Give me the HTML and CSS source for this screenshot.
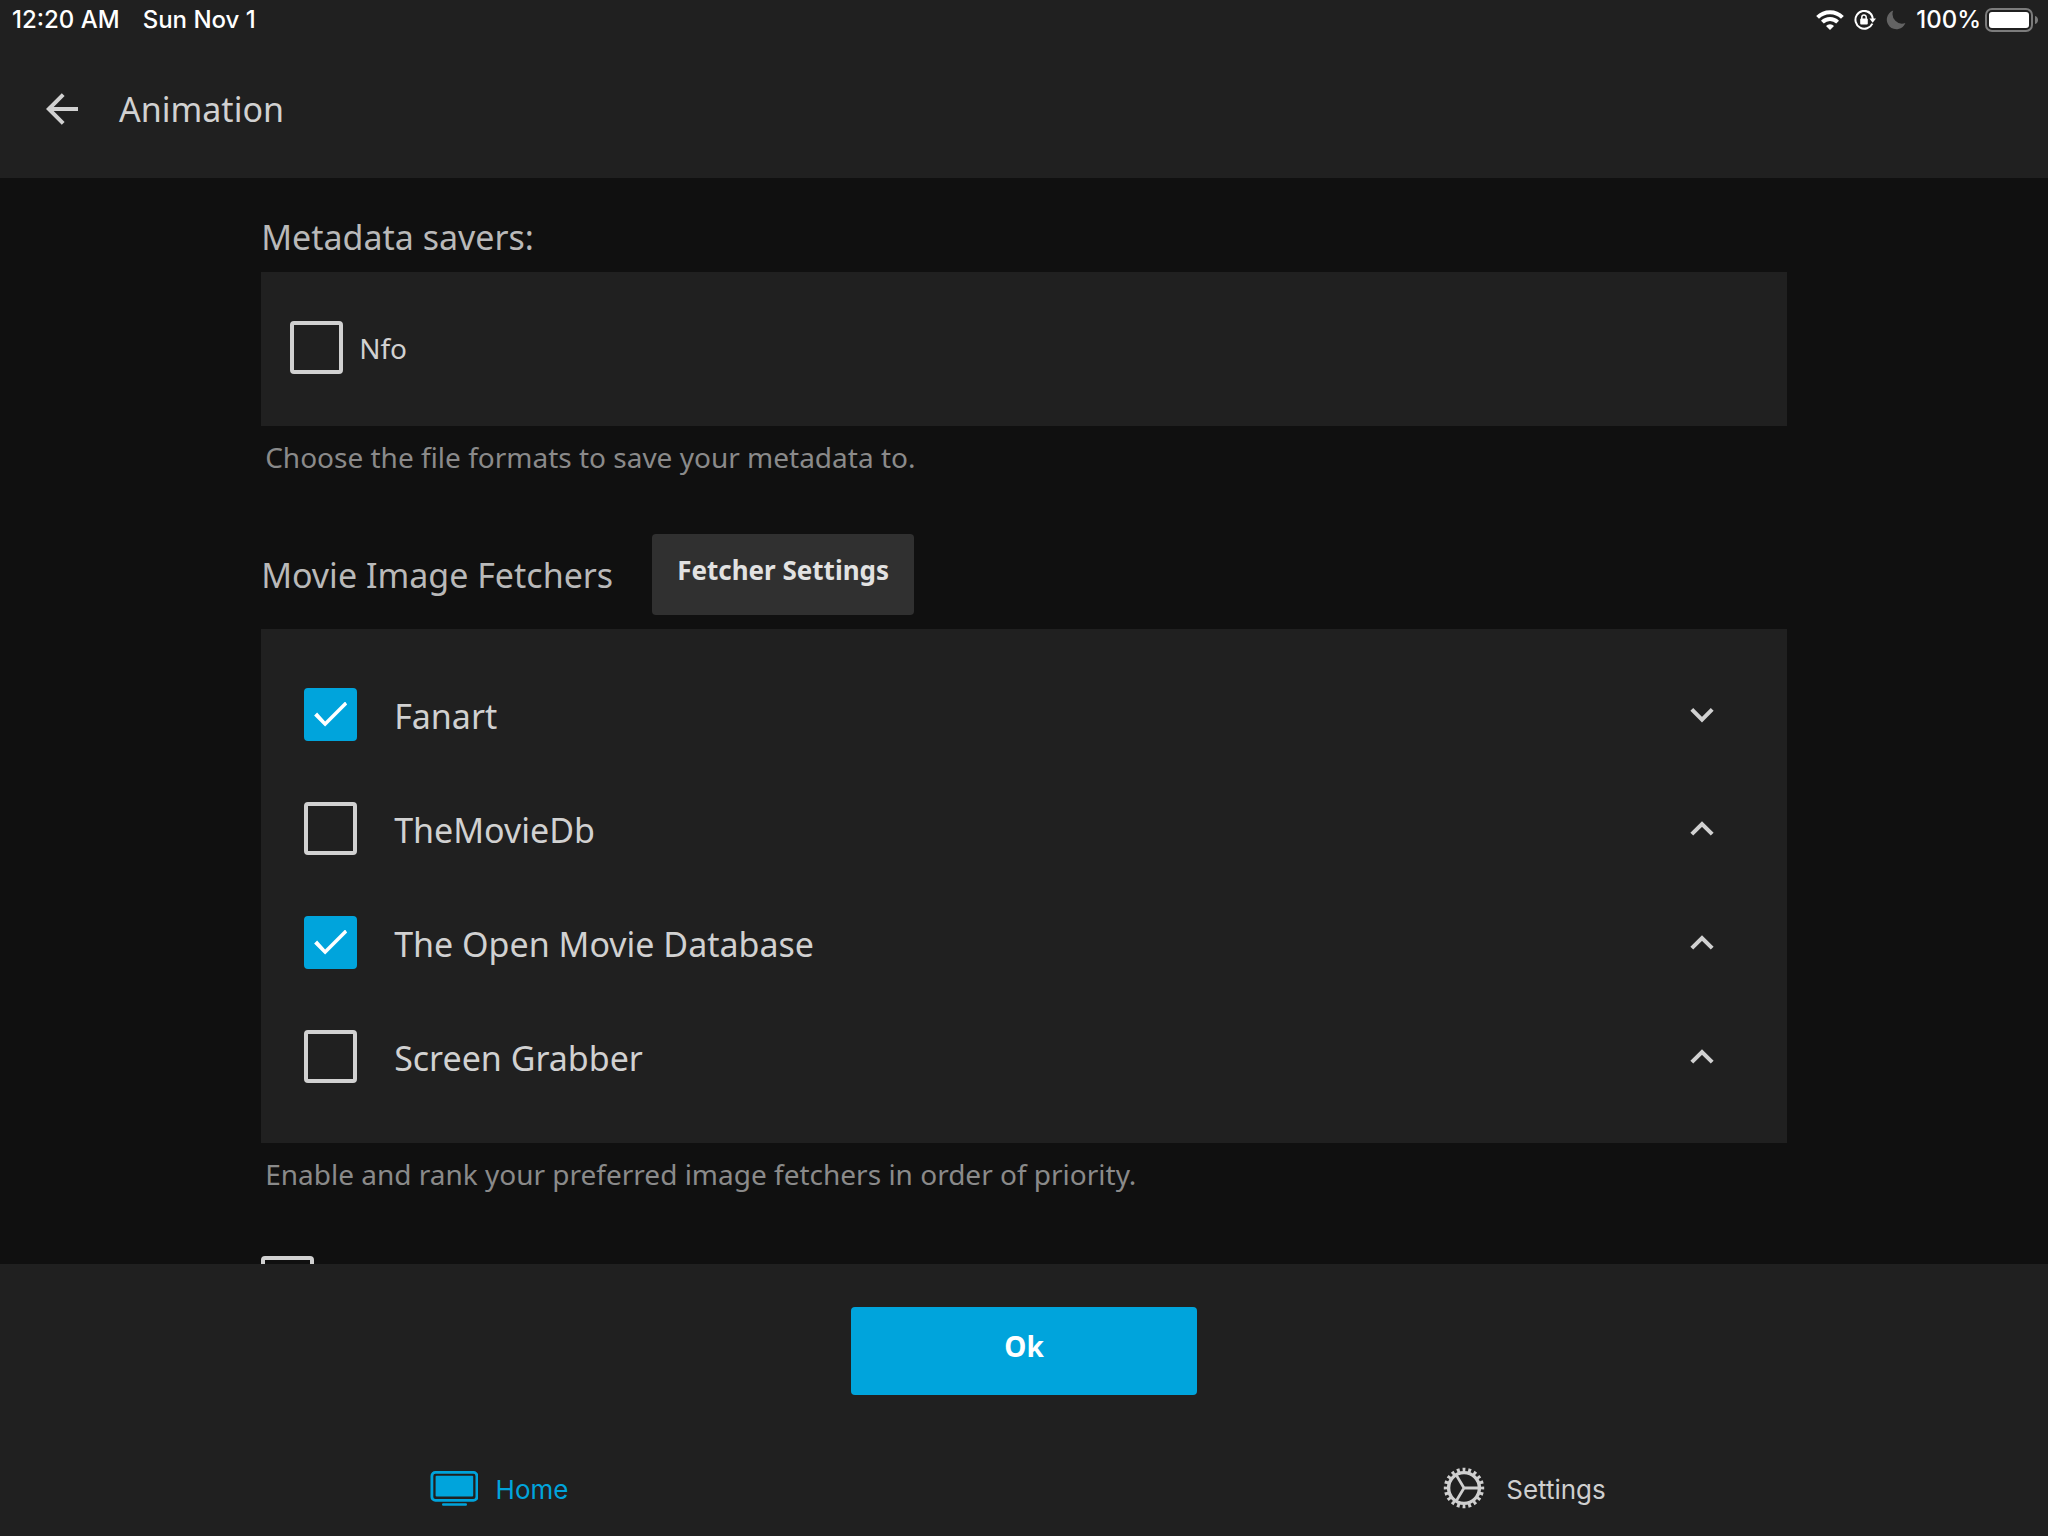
FILE: index.html
```html
<!DOCTYPE html>
<html lang="en">
<head>
<meta charset="utf-8">
<meta name="viewport" content="width=device-width, initial-scale=1">
<title>Animation</title>
<link rel="stylesheet" href="styles.css">
</head>
<body class="app">
<header class="header">
  <div class="status">
    <time>12:20 AM</time>
    <span class="status-date">Sun Nov 1</span>
    <svg class="icon-wifi" width="28" height="20" viewBox="0 0 28 20" fill="none" stroke="#fff" stroke-width="4">
      <path d="M1.6 7.4a17.6 17.6 0 0 1 24.8 0"/>
      <path d="M6.4 12.2a10.8 10.8 0 0 1 15.2 0"/>
      <path d="M14 20l-4-4.1a5.6 5.6 0 0 1 8 0z" fill="#fff" stroke="none"/>
    </svg>
    <svg class="icon-lock" width="22" height="20" viewBox="0 0 22 20" fill="none">
      <path d="M15.6 2.6A8.9 8.9 0 1 0 18.4 13.6" stroke="#fff" stroke-width="2"/>
      <path d="M13.6 1.5a9 9 0 0 1 5.2 7.5" stroke="#fff" stroke-width="2"/>
      <path d="M15.4 8.6h6.6l-3.3 4.2z" fill="#fff"/>
      <rect x="6.2" y="8.6" width="7.6" height="6" rx="1" fill="#fff"/>
      <path d="M7.8 9V7.2a2.2 2.2 0 0 1 4.4 0V9" stroke="#fff" stroke-width="1.5"/>
    </svg>
    <svg class="icon-moon" width="20" height="20" viewBox="0 0 20 20"><path d="M7.2.6A9.6 9.6 0 1 0 19.4 13 9.6 9.6 0 0 1 7.2.6z" fill="#636363"/></svg>
    <span class="status-battery">100%</span>
    <svg class="icon-battery" width="54" height="24" viewBox="0 0 54 24">
      <rect x="1" y="1" width="46" height="22" rx="6" fill="none" stroke="#7c7c7c" stroke-width="2"/>
      <rect x="4" y="4" width="40" height="16" rx="3" fill="#fff"/>
      <path d="M50 8c4 1 4 7 0 8z" fill="#7c7c7c"/>
    </svg>
  </div>
  <div class="titlebar">
    <button class="back" type="button" aria-label="Back">
      <svg width="32" height="32" viewBox="0 0 32 32" fill="none" stroke="#d1d1d1" stroke-width="4"><path d="M32 16H3M17.2 1.6L2.8 16l14.4 14.4"/></svg>
    </button>
    <h1 class="title">Animation</h1>
  </div>
</header>

<main class="content">
  <form class="form" id="options">
    <section class="section">
      <h2 class="heading">Metadata savers:</h2>
      <div class="panel panel-savers">
        <label class="saver"><input class="check" type="checkbox">Nfo</label>
      </div>
      <p class="help">Choose the file formats to save your metadata to.</p>
    </section>

    <section class="section">
      <div class="heading-row">
        <h2 class="heading">Movie Image Fetchers</h2>
        <button class="fetcher-button" type="button">Fetcher Settings</button>
      </div>
      <ul class="panel panel-fetchers">
        <li class="fetcher">
          <label class="fetcher-label"><input class="check" type="checkbox" checked>Fanart</label>
          <button class="move" type="button" aria-label="Move Fanart down"><svg width="24" height="16" viewBox="0 0 24 16"><path d="M1.8 2.4L12 12.6l10.2-10.2"/></svg></button>
        </li>
        <li class="fetcher">
          <label class="fetcher-label"><input class="check" type="checkbox">TheMovieDb</label>
          <button class="move" type="button" aria-label="Move TheMovieDb up"><svg width="24" height="16" viewBox="0 0 24 16"><path d="M1.8 13.2L12 3l10.2 10.2"/></svg></button>
        </li>
        <li class="fetcher">
          <label class="fetcher-label"><input class="check" type="checkbox" checked>The Open Movie Database</label>
          <button class="move" type="button" aria-label="Move The Open Movie Database up"><svg width="24" height="16" viewBox="0 0 24 16"><path d="M1.8 13.2L12 3l10.2 10.2"/></svg></button>
        </li>
        <li class="fetcher">
          <label class="fetcher-label"><input class="check" type="checkbox">Screen Grabber</label>
          <button class="move" type="button" aria-label="Move Screen Grabber up"><svg width="24" height="16" viewBox="0 0 24 16"><path d="M1.8 13.2L12 3l10.2 10.2"/></svg></button>
        </li>
      </ul>
      <p class="help">Enable and rank your preferred image fetchers in order of priority.</p>
    </section>

    <div class="option">
      <input class="check" type="checkbox" aria-label="Save artwork into media folders">
    </div>
  </form>
</main>

<footer class="footer">
  <button class="ok" type="submit" form="options">Ok</button>
  <nav class="tabs">
    <a class="tab tab-active" href="#home">
      <svg width="48" height="44" viewBox="0 0 48 44">
        <rect x="1.9" y="6.4" width="45" height="28" rx="3.5" fill="none" stroke="#00a4dc" stroke-width="2.8"/>
        <rect x="5.6" y="9.8" width="37.6" height="20.6" rx="1" fill="#00a4dc"/>
        <rect x="12" y="37.2" width="25" height="2.6" rx="1.2" fill="#00a4dc"/>
      </svg>
      Home
    </a>
    <a class="tab" href="#settings">
      <svg width="48" height="44" viewBox="0 0 48 44" fill="none" stroke="#cfcfcf">
        <circle cx="24" cy="22" r="15.4" stroke-width="3.4"/>
        <circle cx="24" cy="22" r="18.2" stroke-width="4" pathLength="200" stroke-dasharray="5 5" stroke-dashoffset="2.5"/>
        <path d="M24 22h15M24 22l-8-13.4M24 22l-8 13.4" stroke-width="2.8"/>
      </svg>
      Settings
    </a>
  </nav>
</footer>
</body>
</html>
```
FILE: styles.css
```css
* {
  box-sizing: border-box;
}

.app {
  margin: 0;
  height: 100vh;
  display: grid;
  grid-template-rows: auto minmax(0, 1fr) auto;
  background: #101010;
  color: #d1d1d1;
  font-family: "Noto Sans", sans-serif;
}

button {
  border: 0;
  font-family: inherit;
  color: inherit;
}

svg {
  display: block;
  flex: none;
}

.header,
.footer {
  background: #202020;
}

/* Status bar */
.status {
  display: flex;
  align-items: center;
  height: 40px;
  padding: 0 9px 0 12px;
  color: #fff;
  font: 500 24px/28px Inter, sans-serif;
}

.status-date {
  margin: 0 auto 0 23px;
}

.icon-wifi,
.icon-lock,
.icon-moon {
  margin-right: 10px;
}

.status-battery {
  margin-right: 4px;
}

/* Title bar */
.titlebar {
  display: flex;
  align-items: center;
  gap: 33px;
  height: 138px;
  padding: 0 38px;
}

.back {
  display: grid;
  place-items: center;
  width: 48px;
  height: 48px;
  padding: 0;
  background: none;
}

.title,
.heading {
  margin: 0;
  font-size: 34px;
  font-weight: 400;
  line-height: 46px;
}

.title {
  line-height: 48px;
}

.heading {
  color: #b9b9b9;
}

/* Scrolling form */
.content {
  overflow-y: auto;
  scrollbar-width: none;
}

.form {
  width: 74.5%;
  margin: 0 auto;
  padding: 36px 0;
}

.section {
  margin-bottom: 58px;
}

.panel {
  margin: 12px 0;
  background: #202020;
}

.panel-savers {
  padding: 49px 29px 52px;
}

.saver,
.fetcher-label {
  display: flex;
  align-items: center;
}

.saver {
  gap: 16px;
  font-size: 28px;
  line-height: 38px;
}

.help {
  margin: 0;
  padding-left: 4px;
  color: #8a8a8a;
  font-size: 28px;
  line-height: 38px;
}

.heading-row {
  display: flex;
  align-items: center;
  gap: 39px;
}

.fetcher-button {
  height: 81px;
  padding: 0 25px 10px;
  border-radius: 4px;
  background: #303030;
  color: #e2e2e2;
  font-size: 26px;
  font-weight: 700;
}

.panel-fetchers {
  margin-top: 14px;
  padding: 29px 43px;
  list-style: none;
}

.fetcher {
  display: flex;
  align-items: center;
  justify-content: space-between;
  height: 114px;
}

.fetcher-label {
  gap: 37px;
  padding-top: 2px;
  font-size: 34px;
  line-height: 46px;
}

.fetcher-label .check {
  margin-bottom: 4px;
}

.move {
  display: grid;
  place-items: center;
  width: 84px;
  height: 84px;
  padding: 0;
  background: none;
}

.move path {
  fill: none;
  stroke: #d1d1d1;
  stroke-width: 4;
}

.check {
  appearance: none;
  flex: none;
  display: grid;
  place-items: center;
  width: 53px;
  height: 53px;
  margin: 0;
  border: 4px solid #d1d1d1;
  border-radius: 4px;
}

.check:checked {
  border-color: #00a4dc;
  background: #00a4dc;
}

.check:checked::after {
  content: "";
  width: 33px;
  height: 25px;
  background: #fff;
  clip-path: polygon(0 14px, 3px 11px, 11px 20px, 31px 0, 33px 3px, 11px 25px);
}

.option {
  padding-top: 5px;
}

/* Footer */
.footer {
  padding-top: 43px;
}

.ok {
  display: block;
  width: 346px;
  height: 88px;
  margin: 0 auto;
  padding: 0 0 10px;
  border-radius: 4px;
  background: #00a4dc;
  color: #fff;
  font-size: 28px;
  font-weight: 700;
}

.tabs {
  display: grid;
  grid-template-columns: 1fr 1fr;
  height: 141px;
  padding-top: 49px;
}

.tab {
  display: flex;
  align-items: center;
  justify-content: center;
  gap: 18px;
  padding-right: 26px;
  color: #cfcfcf;
  font: 400 26px/36px Inter, sans-serif;
  text-decoration: none;
}

.tab svg {
  margin-bottom: 5px;
}

.tab-active {
  color: #00a4dc;
}
```
